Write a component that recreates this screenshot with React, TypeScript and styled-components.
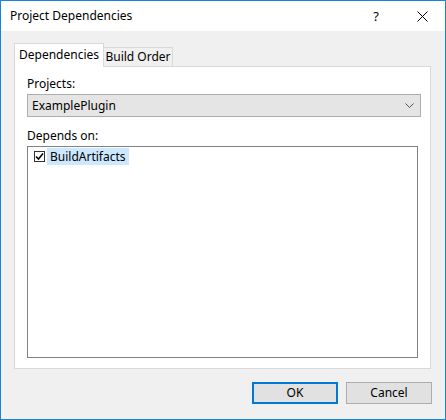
import React from 'react';
import styled, { createGlobalStyle } from 'styled-components';

const GlobalStyle = createGlobalStyle`
  html, body {
    margin: 0;
    padding: 0;
    background: #ffffff;
  }
  * {
    box-sizing: border-box;
  }
`;

const Window = styled.div`
  width: 446px;
  height: 420px;
  border: 1px solid #1883d7;
  background: #f0f0f0;
  display: flex;
  flex-direction: column;
  font-family: 'Noto Sans', 'Liberation Sans', sans-serif;
  font-size: 12px;
  color: #000;
`;

const TitleBar = styled.div`
  height: 30px;
  background: #ffffff;
  display: flex;
  align-items: center;
  padding-left: 9px;
`;

const Title = styled.div`
  flex: 1;
  font-size: 12px;
  line-height: 1;
`;

const TitleButton = styled.div<{ $width: number }>`
  width: ${(p) => p.$width}px;
  height: 30px;
  display: flex;
  align-items: center;
  justify-content: center;
  font-size: 13px;
`;

const Body = styled.div`
  flex: 1;
  padding: 12px 13px 0 13px;
  display: flex;
  flex-direction: column;
`;

const TabStrip = styled.div`
  display: flex;
  align-items: flex-end;
  height: 24px;
  position: relative;
  z-index: 1;
  margin-bottom: -1px;
`;

const Tab = styled.div<{ $active?: boolean; $width: number }>`
  width: ${(p) => p.$width}px;
  height: ${(p) => (p.$active ? 24 : 20)}px;
  border: 1px solid #d9d9d9;
  border-bottom: ${(p) => (p.$active ? 'none' : '1px solid #d9d9d9')};
  border-left: ${(p) => (p.$active ? '1px solid #d9d9d9' : 'none')};
  background: ${(p) => (p.$active ? '#ffffff' : '#f0f0f0')};
  display: flex;
  align-items: center;
  justify-content: center;
  padding-bottom: ${(p) => (p.$active ? 2 : 0)}px;
  line-height: 1;
`;

const Panel = styled.div`
  width: 417px;
  height: 303px;
  background: #ffffff;
  border: 1px solid #d9d9d9;
  padding: 8px 11px 10px 12px;
  display: flex;
  flex-direction: column;
`;

const Label = styled.div`
  height: 18px;
  line-height: 18px;
  margin-top: 0;
`;

const Combo = styled.div`
  margin-top: 1px;
  height: 23px;
  width: 394px;
  background: #e5e5e5;
  border: 1px solid #acacac;
  display: flex;
  align-items: center;
  padding-left: 4px;
  padding-right: 6px;
`;

const ComboText = styled.div`
  flex: 1;
`;

const Spacer = styled.div<{ $h: number }>`
  height: ${(p) => p.$h}px;
`;

const ListBox = styled.div`
  margin-top: 1px;
  width: 391px;
  flex: 1;
  border: 1px solid #828282;
  background: #ffffff;
  padding: 1px 0 0 6px;
`;

const Item = styled.div`
  display: flex;
  align-items: center;
  height: 17px;
`;

const CheckBox = styled.div`
  width: 11px;
  height: 11px;
  border: 1px solid #333333;
  background: #ffffff;
  display: flex;
  align-items: center;
  justify-content: center;
  margin-right: 2px;
`;

const ItemText = styled.div`
  background: #cce8ff;
  height: 17px;
  line-height: 17px;
  padding: 0 3px 0 3px;
`;

const Footer = styled.div`
  display: flex;
  justify-content: flex-end;
  gap: 8px;
  padding-top: 13px;
`;

const Button = styled.div<{ $default?: boolean }>`
  width: 86px;
  height: 22px;
  background: #e1e1e1;
  border: ${(p) => (p.$default ? '2px solid #0078d7' : '1px solid #adadad')};
  display: flex;
  align-items: center;
  justify-content: center;
  line-height: 1;
`;

export default function App() {
  return (
    <>
      <GlobalStyle />
      <Window>
        <TitleBar>
          <Title>Project Dependencies</Title>
          <TitleButton $width={46}>?</TitleButton>
          <TitleButton $width={46}>
            <svg width="11" height="11" viewBox="0 0 11 11">
              <path d="M0.5 0.5 L10.5 10.5 M10.5 0.5 L0.5 10.5" stroke="#000" strokeWidth="1" fill="none" />
            </svg>
          </TitleButton>
        </TitleBar>
        <Body>
          <TabStrip>
            <Tab $active $width={90}>Dependencies</Tab>
            <Tab $width={69}>Build Order</Tab>
          </TabStrip>
          <Panel>
            <Label>Projects:</Label>
            <Combo>
              <ComboText>ExamplePlugin</ComboText>
              <svg width="9" height="5" viewBox="0 0 9 5">
                <path d="M0.5 0.5 L4.5 4.5 L8.5 0.5" stroke="#555" strokeWidth="1" fill="none" />
              </svg>
            </Combo>
            <Spacer $h={10} />
            <Label>Depends on:</Label>
            <ListBox>
              <Item>
                <CheckBox>
                  <svg width="9" height="9" viewBox="0 0 9 9">
                    <path d="M1 4.5 L3.5 7 L8 1.5" stroke="#000" strokeWidth="1.6" fill="none" />
                  </svg>
                </CheckBox>
                <ItemText>BuildArtifacts</ItemText>
              </Item>
            </ListBox>
          </Panel>
          <Footer>
            <Button $default>OK</Button>
            <Button>Cancel</Button>
          </Footer>
        </Body>
      </Window>
    </>
  );
}
